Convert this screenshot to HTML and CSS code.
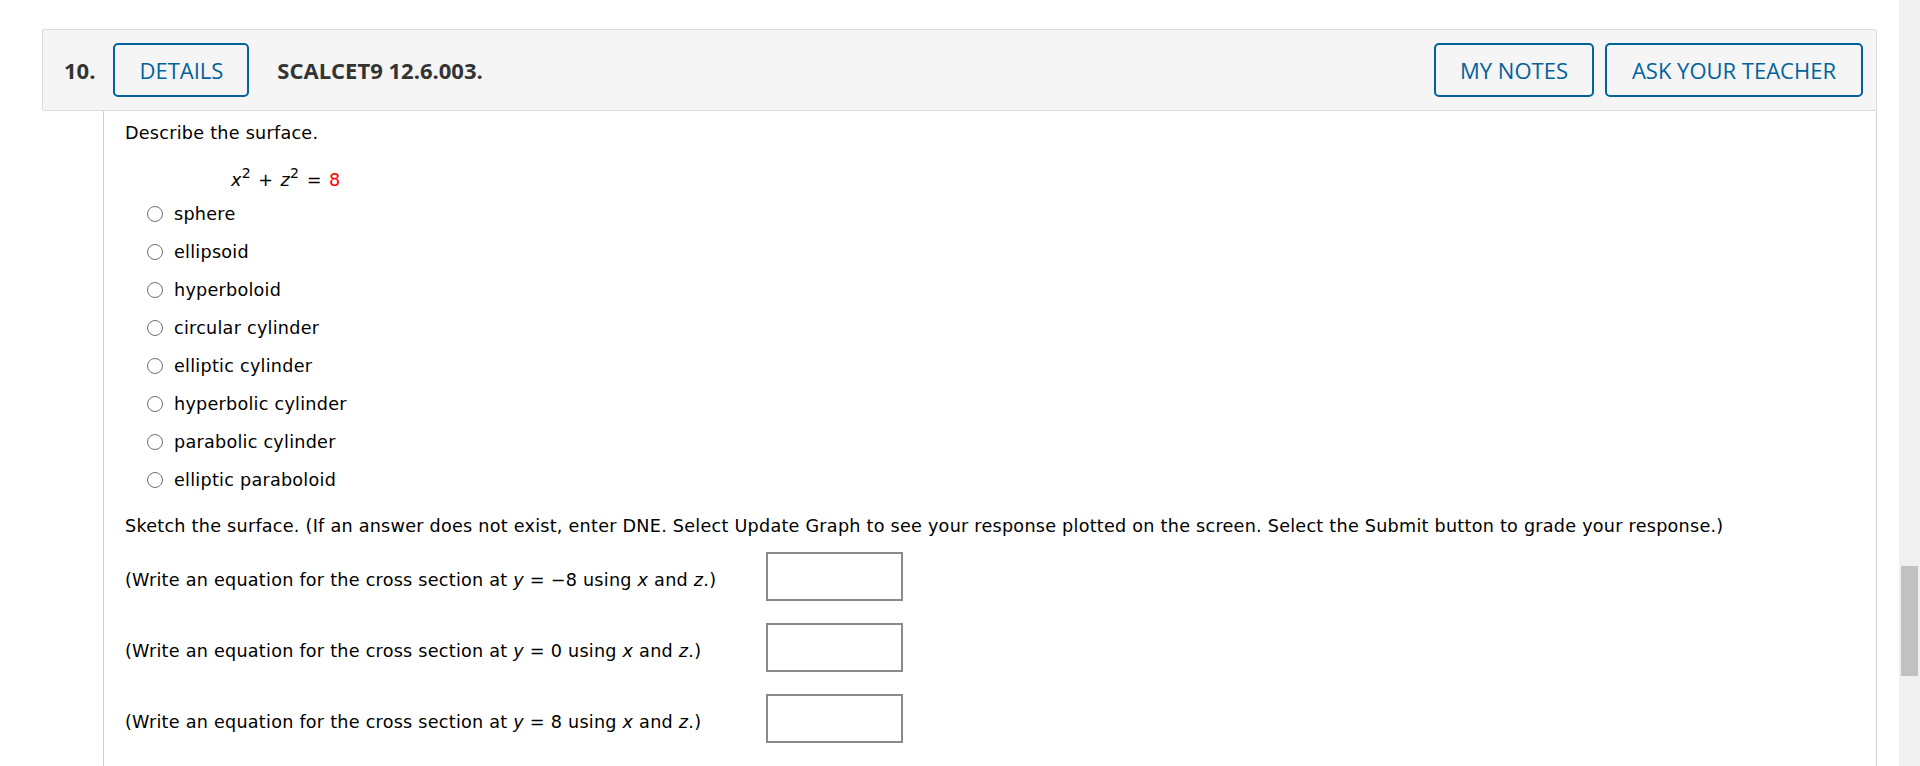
FILE: index.html
```html
<!DOCTYPE html>
<html lang="en">
<head>
  <meta charset="UTF-8">
  <title>Question 10</title>
  <link rel="stylesheet" href="styles.css">
</head>
<body>
  <div class="main">
    <div class="q-head">
      <span class="q-num">10.</span>
      <button class="btn btn-details">DETAILS</button>
      <span class="q-code">SCALCET9 12.6.003.</span>
      <div class="q-tools">
        <button class="btn">MY NOTES</button>
        <button class="btn btn-ask">ASK YOUR TEACHER</button>
      </div>
    </div>

    <div class="q-body">
      <p class="prompt">Describe the surface.</p>
      <p class="equation"><i>x</i><sup>2</sup> + <i>z</i><sup>2</sup> = <span class="red">8</span></p>

      <ul class="choices">
        <li><span class="radio"></span>sphere</li>
        <li><span class="radio"></span>ellipsoid</li>
        <li><span class="radio"></span>hyperboloid</li>
        <li><span class="radio"></span>circular cylinder</li>
        <li><span class="radio"></span>elliptic cylinder</li>
        <li><span class="radio"></span>hyperbolic cylinder</li>
        <li><span class="radio"></span>parabolic cylinder</li>
        <li><span class="radio"></span>elliptic paraboloid</li>
      </ul>

      <p class="sketch">Sketch the surface. (If an answer does not exist, enter DNE. Select Update Graph to see your response plotted on the screen. Select the Submit button to grade your response.)</p>

      <div class="cross">
        <span class="cross-label">(Write an equation for the cross section at <i>y</i> = &minus;8 using <i>x</i> and <i>z</i>.)</span>
        <input class="answer" type="text">
        <span class="cross-label">(Write an equation for the cross section at <i>y</i> = 0 using <i>x</i> and <i>z</i>.)</span>
        <input class="answer" type="text">
        <span class="cross-label">(Write an equation for the cross section at <i>y</i> = 8 using <i>x</i> and <i>z</i>.)</span>
        <input class="answer" type="text">
      </div>
    </div>
  </div>

  <div class="scrollbar">
    <div class="thumb"></div>
  </div>
</body>
</html>
```

FILE: styles.css
```css
html, body {
  margin: 0;
  padding: 0;
  height: 766px;
  overflow: hidden;
}
body {
  display: flex;
  background-color: #fff;
  font-family: "DejaVu Sans", Verdana, sans-serif;
  font-size: 17.6px;
  line-height: 22px;
  letter-spacing: 0.25px;
  color: #000;
}
.main {
  flex: 1;
  padding: 29px 22px 0 42px;
  display: flex;
  flex-direction: column;
}

/* question header */
.q-head {
  display: flex;
  align-items: center;
  padding: 13px 13px 13px 21px;
  background-color: #f5f5f5;
  border: 1px solid #dcdcdc;
  border-radius: 2px;
  font-family: "Open Sans", sans-serif;
  font-size: 22px;
  letter-spacing: 0;
}
.q-num {
  font-weight: 700;
  color: #333;
  margin-right: 18px;
}
.q-code {
  font-weight: 700;
  color: #333;
  margin-left: 28px;
}
.q-tools {
  margin-left: auto;
  display: flex;
  gap: 11px;
}
.btn {
  height: 54px;
  padding: 0 24px;
  border: 2px solid #00639c;
  border-radius: 5px;
  background-color: transparent;
  color: #00639c;
  font-family: "Open Sans", sans-serif;
  font-size: 22px;
  line-height: 50px;
  cursor: pointer;
}
.btn-ask {
  padding: 0 25px;
}

/* question body */
.q-body {
  flex: 1;
  margin-left: 61px;
  border-left: 1px solid #cfcfcf;
  border-right: 1px solid #cfcfcf;
  padding: 11px 22px 40px 21px;
}
.q-body p {
  margin: 0;
}
.equation {
  margin-top: 25px !important;
  padding-left: 106px;
  word-spacing: 1.5px;
}
.equation sup {
  font-size: 0.8em;
  line-height: 0;
  vertical-align: 8px;
}
.red {
  color: #ff0000;
}

.choices {
  list-style: none;
  margin: 4px 0 0;
  padding: 0;
}
.choices li {
  display: flex;
  align-items: center;
  height: 38px;
}
.radio {
  width: 14px;
  height: 14px;
  border: 1px solid #6f6f6f;
  border-radius: 50%;
  margin: 0 11px 0 22px;
  flex: 0 0 auto;
}

.sketch {
  margin-top: 16px !important;
}

.cross {
  display: grid;
  grid-template-columns: 641px 137px;
  grid-auto-rows: 49px;
  row-gap: 22px;
  align-items: center;
  margin-top: 15px;
}
.cross-label {
  padding-top: 6px;
}
.answer {
  box-sizing: border-box;
  width: 137px;
  height: 49px;
  margin: 0;
  border: 2px solid #8a8a8a;
  background: #fff;
}

/* fake window scrollbar */
.scrollbar {
  width: 21px;
  background-color: #f0f0f0;
}
.thumb {
  margin: 566px 2px 0 2px;
  height: 110px;
  background-color: #c1c1c1;
}
```
